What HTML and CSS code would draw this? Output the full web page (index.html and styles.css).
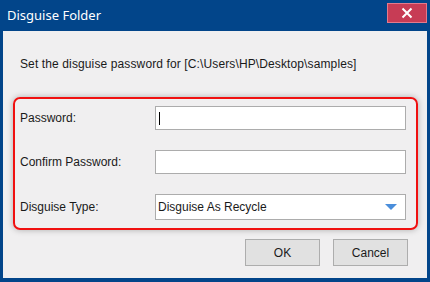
FILE: index.html
```html
<!DOCTYPE html>
<html lang="en">
<head>
    <meta charset="UTF-8">
    <title>Disguise Folder</title>
    <link rel="stylesheet" href="styles.css">
</head>
<body>
    <div class="dialog">
        <div class="titlebar">
            <span class="title">Disguise Folder</span>
            <div class="close">
                <svg width="12" height="12" viewBox="0 0 12 12">
                    <path d="M1.5 1.5L10.5 10.5M10.5 1.5L1.5 10.5" stroke="#fff" stroke-width="2"/>
                </svg>
            </div>
        </div>
        <div class="content">
            <p class="intro">Set the disguise password for [C:\Users\HP\Desktop\samples]</p>
            <div class="group">
                <label>Password:</label>
                <div class="field"><span class="caret"></span></div>
                <label>Confirm Password:</label>
                <div class="field"></div>
                <label>Disguise Type:</label>
                <div class="field select">
                    <span>Disguise As Recycle</span>
                    <svg width="12" height="7" viewBox="0 0 12 7"><path d="M0 0H12L6 6Z" fill="#4a8edb"/></svg>
                </div>
            </div>
            <div class="buttons">
                <div class="btn">OK</div>
                <div class="btn">Cancel</div>
            </div>
        </div>
    </div>
</body>
</html>
```
FILE: styles.css
```css
*{
    margin: 0;
    padding: 0;
    box-sizing: border-box;
}
body{
    width: 430px;
    height: 282px;
    font-family: "Liberation Sans", Arial, sans-serif;
    font-size: 12px;
    color: #1a1a1a;
}
.dialog{
    width: 430px;
    height: 282px;
    background: #02458a;
    padding: 0 3px 4px 3px;
    display: flex;
    flex-direction: column;
}
.titlebar{
    height: 31px;
    display: flex;
    justify-content: space-between;
    align-items: flex-start;
    margin: 0 -3px;
}
.title{
    font-family: "Noto Sans", sans-serif;
    font-size: 13px;
    color: #fff;
    padding: 6px 0 0 7px;
}
.close{
    width: 40px;
    height: 20px;
    margin: 3px 3px 0 0;
    background: #c73c55;
    border: 1px solid #e37a8c;
    display: flex;
    justify-content: center;
    align-items: center;
}
.content{
    flex: 1;
    background: #f0eff0;
    padding: 26px 9px 0 10px;
}
.intro{
    padding-left: 7px;
    line-height: 14px;
    letter-spacing: 0.12px;
}
.group{
    margin-top: 26px;
    width: 405px;
    height: 133px;
    border: 2px solid #f01010;
    border-radius: 7px;
    box-shadow: 0 0 6px rgba(0,0,0,.28);
    padding: 7px 10px 7px 5px;
    display: grid;
    grid-template-columns: 135px 1fr;
    grid-template-rows: 24px 24px 26px;
    row-gap: 20px;
    align-items: center;
}
.group label{
    line-height: 14px;
}
.field{
    height: 100%;
    background: #fff;
    border: 1px solid #acacac;
    display: flex;
    align-items: center;
    padding-left: 2px;
}
.caret{
    width: 1px;
    height: 13px;
    margin-left: 1px;
    background: #000;
}
.select{
    justify-content: space-between;
    padding: 0 8px 0 2px;
}
.buttons{
    display: flex;
    justify-content: flex-end;
    gap: 13px;
    margin-top: 9px;
    padding-right: 10px;
}
.btn{
    width: 75px;
    height: 27px;
    background: #e1e1e1;
    border: 1px solid #adadad;
    display: flex;
    justify-content: center;
    align-items: center;
}
```
